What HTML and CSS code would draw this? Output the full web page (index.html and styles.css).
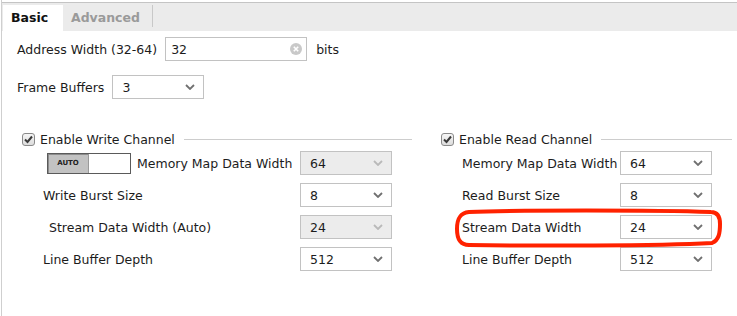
FILE: index.html
```html
<!DOCTYPE html>
<html lang="en">
<head>
    <meta charset="UTF-8">
    <title>VDMA Basic</title>
    <link rel="stylesheet" href="styles.css">
</head>
<body>
    <div class="dialog">
        <div class="tabs">
            <div class="tab active">Basic</div>
            <div class="tab">Advanced</div>
        </div>

        <div class="content">
            <div class="row">
                <span class="label">Address Width (32-64)</span>
                <div class="field text-field">
                    <span>32</span>
                    <svg class="clear" width="12" height="12" viewBox="0 0 12 12">
                        <circle cx="6" cy="6" r="6" fill="#c9c9c9"/>
                        <path d="M3.8 3.8 L8.2 8.2 M8.2 3.8 L3.8 8.2" stroke="#fff" stroke-width="1.6"/>
                    </svg>
                </div>
                <span class="unit">bits</span>
            </div>

            <div class="row frames">
                <span class="label">Frame Buffers</span>
                <div class="field select">
                    <span>3</span>
                    <svg class="chev" width="10" height="6" viewBox="0 0 10 6"><path d="M1 1 L5 5 L9 1" /></svg>
                </div>
            </div>

            <div class="channels">
                <!-- canal de escritura -->
                <div class="group write">
                    <div class="group-head">
                        <span class="check">
                            <svg width="13" height="13" viewBox="0 0 13 13"><path d="M3 6.5 L5.5 9 L10 3.5" /></svg>
                        </span>
                        <span>Enable Write Channel</span>
                        <span class="rule"></span>
                    </div>
                    <div class="param">
                        <span class="label with-toggle">
                            <span class="toggle"><span class="auto">AUTO</span></span>
                            Memory Map Data Width
                        </span>
                        <div class="field select disabled">
                            <span>64</span>
                            <svg class="chev" width="10" height="6" viewBox="0 0 10 6"><path d="M1 1 L5 5 L9 1" /></svg>
                        </div>
                    </div>
                    <div class="param">
                        <span class="label">Write Burst Size</span>
                        <div class="field select">
                            <span>8</span>
                            <svg class="chev" width="10" height="6" viewBox="0 0 10 6"><path d="M1 1 L5 5 L9 1" /></svg>
                        </div>
                    </div>
                    <div class="param">
                        <span class="label indent">Stream Data Width (Auto)</span>
                        <div class="field select disabled">
                            <span>24</span>
                            <svg class="chev" width="10" height="6" viewBox="0 0 10 6"><path d="M1 1 L5 5 L9 1" /></svg>
                        </div>
                    </div>
                    <div class="param">
                        <span class="label">Line Buffer Depth</span>
                        <div class="field select">
                            <span>512</span>
                            <svg class="chev" width="10" height="6" viewBox="0 0 10 6"><path d="M1 1 L5 5 L9 1" /></svg>
                        </div>
                    </div>
                </div>

                <!-- canal de lectura -->
                <div class="group read">
                    <div class="group-head">
                        <span class="check">
                            <svg width="13" height="13" viewBox="0 0 13 13"><path d="M3 6.5 L5.5 9 L10 3.5" /></svg>
                        </span>
                        <span>Enable Read Channel</span>
                        <span class="rule"></span>
                    </div>
                    <div class="param">
                        <span class="label">Memory Map Data Width</span>
                        <div class="field select">
                            <span>64</span>
                            <svg class="chev" width="10" height="6" viewBox="0 0 10 6"><path d="M1 1 L5 5 L9 1" /></svg>
                        </div>
                    </div>
                    <div class="param">
                        <span class="label">Read Burst Size</span>
                        <div class="field select">
                            <span>8</span>
                            <svg class="chev" width="10" height="6" viewBox="0 0 10 6"><path d="M1 1 L5 5 L9 1" /></svg>
                        </div>
                    </div>
                    <div class="param">
                        <span class="label">Stream Data Width</span>
                        <div class="field select">
                            <span>24</span>
                            <svg class="chev" width="10" height="6" viewBox="0 0 10 6"><path d="M1 1 L5 5 L9 1" /></svg>
                        </div>
                    </div>
                    <div class="param">
                        <span class="label">Line Buffer Depth</span>
                        <div class="field select">
                            <span>512</span>
                            <svg class="chev" width="10" height="6" viewBox="0 0 10 6"><path d="M1 1 L5 5 L9 1" /></svg>
                        </div>
                    </div>
                </div>
            </div>
        </div>

        <!-- marca roja dibujada a mano -->
        <svg class="highlight" width="270" height="42" viewBox="0 0 270 42">
            <path d="M14 4 C60 2 200 2 256 4 C263 4 265 9 265 16 C265 25 264 32 257 35 C200 38 80 38 14 37 C5 37 2 31 2 21 C2 12 4 5 14 4 Z" />
        </svg>
    </div>
</body>
</html>
```

FILE: styles.css
```css
body {
    margin: 0;
    background: #fff;
    font-family: "DejaVu Sans", sans-serif;
    font-size: 12.5px;
    color: #1c1c1c;
}

.dialog {
    position: relative;
    width: 737px;
    height: 316px;
    border-left: 1px solid #cfcfcf;
    margin-left: 1px;
    box-sizing: border-box;
    overflow: hidden;
}

.tabs {
    margin-top: 2px;
    border-top: 1px solid #c4c4c4;
    background: #ebebeb;
    height: 28px;
    display: flex;
    align-items: flex-end;
    padding-left: 1px;
}

.tab {
    height: 26px;
    line-height: 25px;
    font-weight: bold;
    color: #9a9a9a;
    padding: 0 8px;
    box-sizing: border-box;
}

.tab.active {
    background: #fff;
    color: #111;
    width: 60px;
}

.tab:not(.active) {
    width: 90px;
    position: relative;
}

.tab:not(.active)::after {
    content: "";
    position: absolute;
    right: 0;
    top: 0;
    height: 22px;
    border-right: 1px solid #c8c8c8;
}

.content {
    padding: 6px 0 0 15px;
}

.label {
    white-space: nowrap;
}

.row {
    display: flex;
    align-items: center;
    height: 24px;
}

.row .label {
    margin-right: 8px;
}

.frames {
    margin-top: 14px;
}

.field {
    height: 24px;
    box-sizing: border-box;
    border: 1px solid #c2c2c2;
    background: #fff;
    display: flex;
    align-items: center;
    justify-content: space-between;
    padding: 0 8px 0 7px;
    flex-shrink: 0;
}

.text-field {
    width: 142px;
    padding: 0 4px 0 5px;
}

.unit {
    margin-left: 9px;
}

.select {
    width: 92px;
    padding-left: 9px;
}

.chev path {
    fill: none;
    stroke: #707070;
    stroke-width: 1.8;
}

.select.disabled {
    background: #ececec;
}

.select.disabled .chev path {
    stroke: #b9b9b9;
}

.channels {
    display: flex;
    margin-top: 32px;
    margin-left: 5px;
}

.group {
    display: flex;
    flex-direction: column;
    gap: 8px;
}

.write {
    width: 390px;
}

.read {
    width: 291px;
    margin-left: 29px;
}

.group-head {
    display: flex;
    align-items: center;
    height: 16px;
    margin-bottom: -4px;
}

.check {
    width: 13px;
    height: 13px;
    box-sizing: border-box;
    border: 1px solid #8a8a8a;
    border-radius: 3px;
    background: linear-gradient(#f6f6f6, #dcdcdc);
    margin-right: 5px;
    position: relative;
}

.check svg {
    position: absolute;
    left: -1px;
    top: -1px;
}

.check path {
    fill: none;
    stroke: #3a3a3a;
    stroke-width: 2;
}

.rule {
    flex: 1;
    border-top: 1px solid #cdcdcd;
    margin-left: 9px;
    margin-top: 1px;
}

.param {
    display: flex;
    align-items: center;
    justify-content: space-between;
    height: 24px;
}

.write .param {
    padding-right: 20px;
}

.write .label {
    padding-left: 21px;
}

.write .label.indent {
    padding-left: 27px;
}

.write .label.with-toggle {
    padding-left: 25px;
    display: flex;
    align-items: center;
}

.read .param {
    padding-left: 21px;
    padding-right: 20px;
}

.toggle {
    width: 84px;
    height: 21px;
    box-sizing: border-box;
    border: 1px solid #5a5a5a;
    background: #fff;
    display: flex;
    margin-right: 6px;
}

.auto {
    width: 40px;
    background: #c2c2c2;
    border-right: 1px solid #9a9a9a;
    font-size: 7px;
    font-weight: bold;
    color: #222;
    display: flex;
    align-items: center;
    justify-content: center;
    box-shadow: inset 1px 1px 0 #8c8c8c;
}

.highlight {
    position: absolute;
    left: 453px;
    top: 208px;
}

.highlight path {
    fill: none;
    stroke: #ff2200;
    stroke-width: 4;
}
```
